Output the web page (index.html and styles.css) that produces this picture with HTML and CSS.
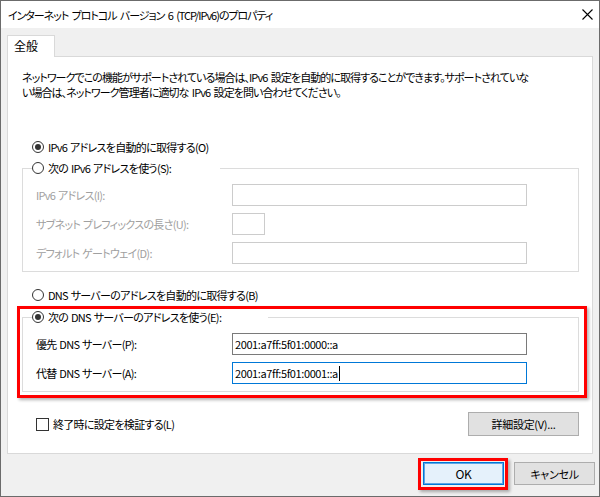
FILE: index.html
```html
<!DOCTYPE html>
<html lang="ja">
<head>
<meta charset="utf-8">
<link rel="stylesheet" href="styles.css">
</head>
<body>
<div class="window">
  <div class="titlebar">
    <span class="title">インターネット プロトコル バージョン 6 (TCP/IPv6)のプロパティ</span>
    <svg class="close" width="11" height="11" viewBox="0 0 11 11"><path d="M0.5 0.5 L10.5 10.5 M10.5 0.5 L0.5 10.5" stroke="#000" stroke-width="1.1" fill="none"/></svg>
  </div>
  <div class="tabs"><div class="tab">全般</div></div>
  <div class="panel">
    <div class="desc">
      <div class="desc-line">ネットワークでこの機能がサポートされている場合は、IPv6 設定を自動的に取得することができます。サポートされていな</div>
      <div class="desc-line">い場合は、ネットワーク管理者に適切な IPv6 設定を問い合わせてください。</div>
    </div>

    <div class="radio-row first"><span class="radio on"></span><span>IPv6 アドレスを自動的に取得する(O)</span></div>

    <fieldset class="group g1">
      <legend class="legend l1"><span class="radio"></span><span>次の IPv6 アドレスを使う(S):</span></legend>
      <div class="field disabled"><span class="label">IPv6 アドレス(I):</span><span class="input wide"></span></div>
      <div class="field disabled"><span class="label">サブネット プレフィックスの長さ(U):</span><span class="input short"></span></div>
      <div class="field disabled"><span class="label">デフォルト ゲートウェイ(D):</span><span class="input wide"></span></div>
    </fieldset>

    <div class="radio-row second"><span class="radio"></span><span>DNS サーバーのアドレスを自動的に取得する(B)</span></div>

    <div class="marked">
      <fieldset class="group g2">
        <legend class="legend l2"><span class="radio on"></span><span>次の DNS サーバーのアドレスを使う(E):</span></legend>
        <div class="field"><span class="label">優先 DNS サーバー(P):</span><span class="input wide enabled">2001:a7ff:5f01:0000::a</span></div>
        <div class="field"><span class="label">代替 DNS サーバー(A):</span><span class="input wide enabled focus">2001:a7ff:5f01:0001::a<span class="caret"></span></span></div>
      </fieldset>
    </div>

    <div class="bottom-row">
      <div class="check-row"><span class="checkbox"></span><span>終了時に設定を検証する(L)</span></div>
      <button class="btn advanced">詳細設定(V)...</button>
    </div>
  </div>
  <div class="footer">
    <div class="ok-wrap"><button class="btn ok">OK</button></div>
    <button class="btn cancel">キャンセル</button>
  </div>
</div>
</body>
</html>
```
FILE: styles.css
```css
* { box-sizing: border-box; }
html, body { margin: 0; padding: 0; background: #fff; }
body {
  font-family: "Noto Sans CJK JP", sans-serif;
  font-size: 11px;
  font-feature-settings: "palt";
  letter-spacing: -0.7px;
  word-spacing: 1px;
  color: #000;
}
.window {
  width: 600px;
  height: 497px;
  border: 1px solid #6b6b6b;
  background: #f0f0f0;
  display: flex;
  flex-direction: column;
}
.titlebar {
  height: 27px;
  background: #fff;
  display: flex;
  align-items: center;
  justify-content: space-between;
  padding: 0 6px 0 7px;
}
.title { line-height: 16px; letter-spacing: -1.05px; word-spacing: 2px; }
.close { display: block; }
.tabs {
  padding: 7px 0 0 6px;
  display: flex;
  height: 29px;
}
.tab {
  width: 48px;
  height: 22px;
  background: #fff;
  border: 1px solid #d9d9d9;
  border-bottom: none;
  padding-left: 6px;
  font-size: 12px;
  line-height: 20px;
  letter-spacing: 0;
  position: relative;
  z-index: 1;
}
.panel {
  margin: -1px 6px 0 6px;
  height: 398px;
  background: #fff;
  border: 1px solid #d9d9d9;
  padding: 0 13px 0 14px;
  display: flex;
  flex-direction: column;
}
.desc {
  margin: 13px 0 0 0;
  white-space: nowrap;
  letter-spacing: -0.95px;
  word-spacing: 2px;
}
.desc-line { height: 15px; line-height: 15px; }
.radio-row {
  display: flex;
  align-items: center;
  height: 16px;
  gap: 4px;
}
.radio-row.first { margin: 39px 0 0 10px; }
.radio-row.second { margin: 15px 0 0 10px; }
.radio {
  width: 12px;
  height: 12px;
  border: 1px solid #333;
  border-radius: 50%;
  display: inline-flex;
  align-items: center;
  justify-content: center;
  background: #fff;
  flex: none;
}
.radio.on::after {
  content: "";
  width: 6px;
  height: 6px;
  border-radius: 50%;
  background: #333;
}
.group {
  margin: 0;
  border: 1px solid #dcdcdc;
  padding: 8px 0 7px 13px;
  min-width: 0;
}
.g1 { margin-top: 5px; }
.legend {
  display: flex;
  align-items: center;
  gap: 4px;
  height: 16px;
  padding: 0;
  margin-left: -4px;
  background: #fff;
}
.l1 { width: 188px; }
.l2 { width: 236px; }
.field {
  display: flex;
  align-items: center;
  height: 22px;
}
.field + .field { margin-top: 7px; }
.label { width: 196px; flex: none; white-space: nowrap; }
.disabled .label { color: #a0a0a0; }
.input {
  height: 22px;
  border: 1px solid #cccccc;
  background: #fff;
  display: flex;
  align-items: center;
  padding-left: 2px;
  letter-spacing: -0.4px;
}
.input.wide { width: 295px; }
.input.short { width: 33px; }
.input.enabled { border-color: #7a7a7a; }
.input.focus { border-color: #0078d7; }
.caret {
  display: inline-block;
  width: 1px;
  height: 15px;
  background: #000;
  margin-left: 1px;
}
.marked {
  position: relative;
  margin-top: 6px;
}
.marked::after {
  content: "";
  position: absolute;
  top: -3px;
  left: -5px;
  right: -8px;
  bottom: -6px;
  border: 3px solid #ff0000;
  box-shadow: 2px 2px 3px rgba(0,0,0,0.3);
  pointer-events: none;
}
.bottom-row {
  margin-top: 20px;
  display: flex;
  justify-content: space-between;
  align-items: center;
  height: 24px;
}
.check-row {
  display: flex;
  align-items: center;
  gap: 4px;
  margin-left: 14px;
}
.checkbox {
  width: 13px;
  height: 13px;
  border: 1px solid #333;
  background: #fff;
}
.btn {
  font: inherit;
  letter-spacing: -0.3px;
  font-feature-settings: inherit;
  color: #000;
  background: #e1e1e1;
  border: 1px solid #adadad;
  padding: 0;
  margin: 0;
}
.advanced { width: 111px; height: 24px; }
.footer {
  display: flex;
  justify-content: flex-end;
  gap: 10px;
  padding: 8px 4px 0 0;
}
.ok-wrap { position: relative; }
.ok-wrap::after {
  content: "";
  position: absolute;
  top: -4px;
  left: -5px;
  right: -4px;
  bottom: -5px;
  border: 3px solid #ff0000;
  box-shadow: 2px 2px 3px rgba(0,0,0,0.3);
  pointer-events: none;
}
.ok, .cancel { width: 81px; height: 23px; display: block; }
.ok {
  font-size: 12px;
  background: #e5f1fb;
  border: 1px solid #0078d7;
  box-shadow: inset 0 0 0 1px #5ea6e6;
}
```
